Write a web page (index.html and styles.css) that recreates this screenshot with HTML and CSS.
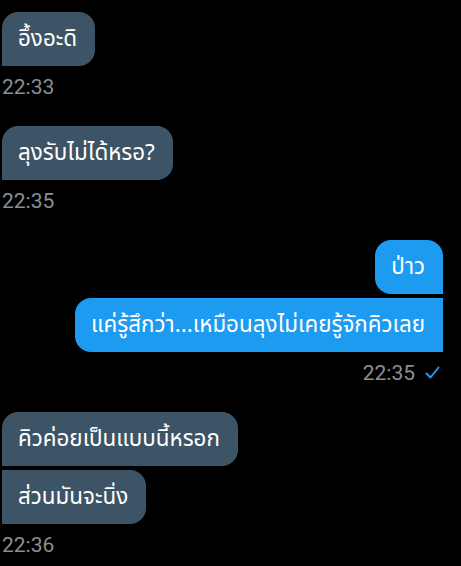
FILE: index.html
```html
<!DOCTYPE html>
<html lang="th">
<head>
    <meta charset="UTF-8">
    <meta name="viewport" content="width=device-width, initial-scale=1.0">
    <title>Chat</title>
    <link rel="stylesheet" href="styles.css">
</head>
<body>
<div class="chat">
    <!-- Incoming -->
    <div class="group incoming">
        <div class="bubble">อึ้งอะดิ</div>
        <div class="time">22:33</div>
    </div>

    <div class="group incoming">
        <div class="bubble">ลุงรับไม่ได้หรอ?</div>
        <div class="time">22:35</div>
    </div>

    <!-- Outgoing -->
    <div class="group outgoing">
        <div class="bubble">ป่าว</div>
        <div class="bubble">แค่รู้สึกว่า...เหมือนลุงไม่เคยรู้จักคิวเลย</div>
        <div class="time">
            22:35
            <svg class="check" width="15" height="14" viewBox="0 0 15 14">
                <path d="M1.5 7.5 L5.5 11.5 L13.5 1.5" fill="none" stroke="#1d9bf0" stroke-width="2" stroke-linecap="round" stroke-linejoin="round"/>
            </svg>
        </div>
    </div>

    <div class="group incoming">
        <div class="bubble">คิวค่อยเป็นแบบนี้หรอก</div>
        <div class="bubble">ส่วนมันจะนิ่ง</div>
        <div class="time">22:36</div>
    </div>
</div>
</body>
</html>
```

FILE: styles.css
```css
body {
    background: #000;
    color: #fff;
    font-family: "Noto Sans Thai", Roboto, "Noto Sans", sans-serif;
    margin: 0;
    padding: 0;
}

.chat {
    display: flex;
    flex-direction: column;
    gap: 26px;
    padding: 12px 18px 0 2px;
}

.group {
    display: flex;
    flex-direction: column;
    gap: 4px;
}

.incoming {
    align-items: flex-start;
}

.outgoing {
    align-items: flex-end;
}

.bubble {
    height: 54px;
    box-sizing: border-box;
    padding: 0 18px 0 16px;
    display: flex;
    align-items: center;
    font-size: 22.4px;
    white-space: nowrap;
}

.incoming .bubble {
    background: #3d5466;
    border-radius: 16px 16px 16px 0;
}

.incoming .bubble + .bubble {
    border-radius: 0 16px 16px 0;
}

.outgoing .bubble {
    background: #1d9bf0;
    border-radius: 16px 16px 0 16px;
}

.outgoing .bubble + .bubble {
    border-radius: 16px 0 0 16px;
}

.time {
    display: flex;
    align-items: center;
    gap: 10px;
    margin-top: 4px;
    font-family: Roboto, sans-serif;
    font-size: 21px;
    line-height: 26px;
    color: #8b8f94;
}

.outgoing .time {
    margin-right: 3px;
}
```
